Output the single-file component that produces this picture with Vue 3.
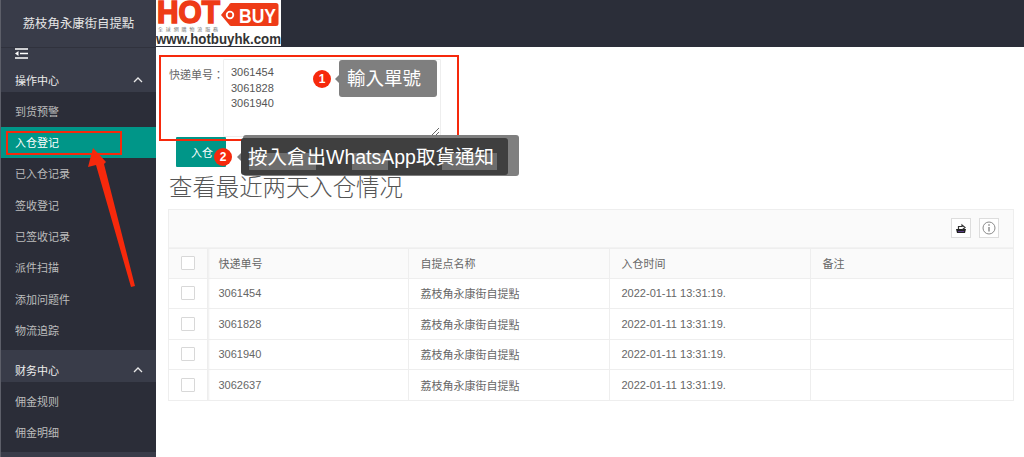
<script setup>
const ops = ['到货预警', '入仓登记', '已入仓记录', '签收登记', '已签收记录', '派件扫描', '添加问题件', '物流追踪']
const fin = ['佣金规则', '佣金明细']
const rows = ['3061454', '3061828', '3061940', '3062637']
const site = '荔枝角永康街自提點'
const time = '2022-01-11 13:31:19.'
const nums = '3061454\n3061828\n3061940'
</script>

<template>
  <div class="shell">
    <aside class="side">
      <div class="brand">{{ site }}</div>
      <div class="toggle">
        <svg width="13" height="11" viewBox="0 0 13 11"><path d="M0 1h13M5 5.500h8M0 10h13" stroke="#fff" stroke-width="1.600" fill="none"/><path d="M3.500 3L0 5.500 3.500 8z" fill="#fff"/></svg>
      </div>
      <div class="group">
        <span>操作中心</span>
        <svg class="chev" width="10" height="6" viewBox="0 0 10 6"><path d="M1 5l4-4 4 4" stroke="#e8e8e8" stroke-width="1.300" fill="none"/></svg>
      </div>
      <div class="list">
        <div v-for="item in ops" :key="item" class="item" :class="{ active: item === '入仓登记' }">{{ item }}</div>
      </div>
      <div class="group finance">
        <span>财务中心</span>
        <svg class="chev" width="10" height="6" viewBox="0 0 10 6"><path d="M1 5l4-4 4 4" stroke="#e8e8e8" stroke-width="1.300" fill="none"/></svg>
      </div>
      <div class="list">
        <div v-for="item in fin" :key="item" class="item">{{ item }}</div>
      </div>
      <div class="tail"></div>
    </aside>

    <div class="body">
      <header class="top">
        <svg class="logo" width="125" height="46" viewBox="0 0 125 46">
          <rect width="125" height="46" fill="#fff"/>
          <text x="1" y="23" class="hot" textLength="63" lengthAdjust="spacingAndGlyphs">HOT</text>
          <path d="M65 15l8-10a2.500 2.500 0 0 1 2-2h45a2.500 2.500 0 0 1 2.500 2.500v18a2.500 2.500 0 0 1-2.500 2.500h-45a2.500 2.500 0 0 1-2-1.500z" fill="#ee3b17"/>
          <circle cx="74" cy="15" r="3.300" fill="#ee3b17" stroke="#fff" stroke-width="1.800"/>
          <text x="83" y="23" class="buy" textLength="37" lengthAdjust="spacingAndGlyphs">BUY</text>
          <text x="2" y="31" class="tiny" textLength="60" lengthAdjust="spacing">全球網購物流服務</text>
          <text x="0" y="43.500" class="web" textLength="125" lengthAdjust="spacingAndGlyphs">www.hotbuyhk.com</text>
        </svg>
      </header>

      <main class="main">
        <div class="form-row">
          <label class="label">快递单号：</label>
          <textarea class="nums" readonly :value="nums"></textarea>
        </div>
        <button class="submit">入仓</button>
        <h2 class="title">查看最近两天入仓情况</h2>

        <section class="panel">
          <div class="tools">
            <span class="tool">
              <svg width="12" height="12" viewBox="0 0 12 12"><path d="M1 7h10l-1 4H2z" fill="#222"/><path d="M3.500 7V4.500H7V3l3 2.500L7 8" fill="none" stroke="#333" stroke-width="1.200"/><path d="M3 9.500h6" stroke="#5a3d8a"/></svg>
            </span>
            <span class="tool">
              <svg width="14" height="14" viewBox="0 0 14 14"><circle cx="7" cy="7" r="6" fill="none" stroke="#8a8a8a"/><path d="M7 6v4.500" stroke="#666" stroke-width="1.100"/><circle cx="7" cy="4" r=".8" fill="#666"/></svg>
            </span>
          </div>
          <table class="grid">
            <colgroup><col class="c0"><col class="c1"><col class="c1"><col class="c1"><col></colgroup>
            <thead>
              <tr>
                <th class="check"><i class="box"></i></th>
                <th>快递单号</th><th>自提点名称</th><th>入仓时间</th><th>备注</th>
              </tr>
            </thead>
            <tbody>
              <tr v-for="r in rows" :key="r">
                <td class="check"><i class="box"></i></td>
                <td>{{ r }}</td><td>{{ site }}</td><td>{{ time }}</td><td></td>
              </tr>
            </tbody>
          </table>
        </section>
      </main>
    </div>

    <!-- screenshot annotations -->
    <div class="frame f-side"></div>
    <div class="frame f-form"></div>
    <svg class="arrow" width="60" height="150" viewBox="0 0 60 150">
      <path d="M13 8L8 27l8-2 35 122 4-1L24 24l2-2z" fill="#f6290c"/>
    </svg>
    <span class="dot d1">1</span>
    <div class="bubble b1">輸入單號</div>
    <span class="dot d2">2</span>
    <div class="shade"></div>
    <div class="bubble b2">
      <i class="patch p1"></i><i class="patch p2"></i><i class="patch p3"></i>
      <span class="b2-text">按入倉出WhatsApp取貨通知</span>
    </div>
  </div>
</template>

<style>
html, body { margin: 0; background: #fff; overflow: hidden; }
</style>

<style scoped>
.shell {
  position: relative;
  display: flex;
  width: 1024px;
  height: 457px;
  overflow: hidden;
  font-family: "Liberation Sans", "Noto Sans CJK SC", sans-serif;
  font-size: 11px;
  color: #666;
  background: #fff;
}
.side {
  width: 155px;
  flex: none;
  border-left: 1px solid #5d5f69;
  background: #2b2d38;
  color: #c2c2c2;
  display: flex;
  flex-direction: column;
}
.brand {
  height: 47px;
  line-height: 47px;
  text-align: center;
  font-size: 12.400px;
  color: #e6e6e6;
  background: #393c49;
  font-family: "Noto Sans CJK TC", "Noto Sans CJK SC", sans-serif;
}
.toggle {
  height: 15px;
  background: #393c49;
  border-top: 1px solid #30323d;
  box-sizing: border-box;
  padding: 0 0 3px 14px;
  display: flex;
  align-items: center;
}
.group {
  height: 30px;
  flex: none;
  box-sizing: border-box;
  background: #393c49;
  color: #eee;
  padding: 6px 13px 0 14px;
  display: flex;
  align-items: center;
  justify-content: space-between;
}
.finance { height: 32px; padding-top: 7px; }
.list { padding: 3.600px 0 3.800px; flex: none; }
.item {
  height: 31.340px;
  line-height: 32.340px;
  padding-left: 14px;
  color: #bdbdbd;
}
.item.active { background: #009688; color: #fff; }
.tail { flex: 1; margin-top: 0; background: #393c49; }
.body { flex: 1; min-width: 0; display: flex; flex-direction: column; }
.top { height: 47px; flex: none; background: #2b2e39; }
.logo { display: block; }
.hot { font: 900 31px "Liberation Sans", sans-serif; fill: #ee3b17; stroke: #ee3b17; stroke-width: 1.600px; }
.buy { font: 700 20px "Liberation Sans", sans-serif; fill: #fff; }
.tiny { font: 5px "Noto Sans CJK TC", sans-serif; fill: #777; }
.web { font: 700 14px "Liberation Sans", sans-serif; fill: #333; }
.main { flex: 1; padding: 12px 10px 0 12px; min-width: 0; }
.form-row { display: flex; padding-left: 1px; }
.label {
  width: 54px;
  flex: none;
  padding-top: 8px;
  line-height: 14px;
  white-space: nowrap;
  font-family: "Noto Sans CJK TC", sans-serif;
}
.nums {
  width: 218px;
  height: 78px;
  box-sizing: border-box;
  padding: 5px 7px;
  border: 1px solid #eee;
  border-radius: 1px;
  font: 11px/15.500px "Liberation Sans", sans-serif;
  color: #555;
  outline: none;
  background: #fff;
  display: block;
}
.submit {
  display: block;
  width: 50px;
  height: 30px;
  margin: 0 0 0 8px;
  border: 0;
  border-radius: 1px;
  background: #009688;
  color: #fff;
  text-align: left;
  padding: 0 0 0 15px;
  font: 11px "Liberation Sans", "Noto Sans CJK SC", sans-serif;
}
.title {
  margin: 5px 0 8px 1px;
  height: 29px;
  font-size: 23.400px;
  line-height: 29px;
  font-weight: 300;
  color: #555;
  font-family: "Noto Sans CJK SC", sans-serif;
}
.panel { border: 1px solid #eee; border-bottom: 0; margin-top: 0; }
.tools {
  height: 37.500px;
  background: #fafafa;
  display: flex;
  justify-content: flex-end;
  align-items: center;
  gap: 8px;
  padding-right: 14px;
  border-bottom: 1px solid #f2f2f2;
  box-sizing: border-box;
}
.tool {
  width: 20px;
  height: 20px;
  box-sizing: border-box;
  border: 1px solid #ddd;
  background: #fff;
  display: flex;
  align-items: center;
  justify-content: center;
}
.grid { width: 100%; border-collapse: collapse; table-layout: fixed; }
.c0 { width: 38px; }
.c1 { width: 201px; }
th, td {
  border: 1px solid #eee;
  padding: 0 0 0 12px;
  text-align: left;
  font-weight: 400;
  height: 30.500px;
  box-sizing: border-box;
  color: #666;
}
th { background: #fafafa; height: 30px; }
tr > :first-child { border-left: 0; }
tr > :last-child { border-right: 0; }
tr > :nth-child(2) { padding-left: 11px; box-shadow: inset 2px 0 2px -1px #eee; }
.check { padding: 0; text-align: center; }
.box {
  display: inline-block;
  width: 14px;
  height: 14px;
  box-sizing: border-box;
  border: 1px solid #d8d8d8;
  border-radius: 1px;
  background: #fff;
  vertical-align: middle;
}
.frame { position: absolute; box-sizing: border-box; border: 2px solid #f6290c; }
.f-side { left: 6px; top: 131px; width: 116px; height: 24px; }
.f-form { left: 159px; top: 55px; width: 300px; height: 86px; }
.arrow { position: absolute; left: 80px; top: 140px; }
.dot {
  position: absolute;
  width: 18px;
  height: 18px;
  border-radius: 50%;
  background: #f6290c;
  color: #fff;
  text-align: center;
  font: 700 12px/18px "Liberation Sans", sans-serif;
}
.d1 { left: 313px; top: 70px; }
.d2 { left: 214px; top: 148px; }
.bubble {
  position: absolute;
  box-sizing: border-box;
  border-radius: 3px;
  color: #fff;
  font-family: "Liberation Sans", "Noto Sans CJK TC", sans-serif;
}
.bubble::before {
  content: "";
  position: absolute;
  left: -4px;
  top: 50%;
  margin-top: -4px;
  border-style: solid;
  border-width: 4px 4px 4px 0;
  border-color: transparent #7f7f7f transparent transparent;
}
.b1 {
  left: 339px;
  top: 60px;
  width: 98px;
  height: 37px;
  background: #7f7f7f;
  font-size: 18.500px;
  line-height: 37px;
  padding-left: 8px;
}
.shade {
  position: absolute;
  left: 243px;
  top: 135px;
  width: 276px;
  height: 41px;
  background: #7f7f7f;
  border-radius: 3px;
}
.b2 {
  left: 241px;
  top: 138px;
  width: 267px;
  height: 37px;
  background: #3f3f3f;
  font-size: 19.500px;
  line-height: 39px;
}
.patch { position: absolute; top: 15px; height: 17px; background: #6d6d6d; }
.p1 { left: 8px; width: 67px; }
.p2 { left: 111px; width: 36px; }
.p3 { left: 201px; width: 55px; }
.b2-text { position: relative; left: 7px; white-space: nowrap; }
</style>
